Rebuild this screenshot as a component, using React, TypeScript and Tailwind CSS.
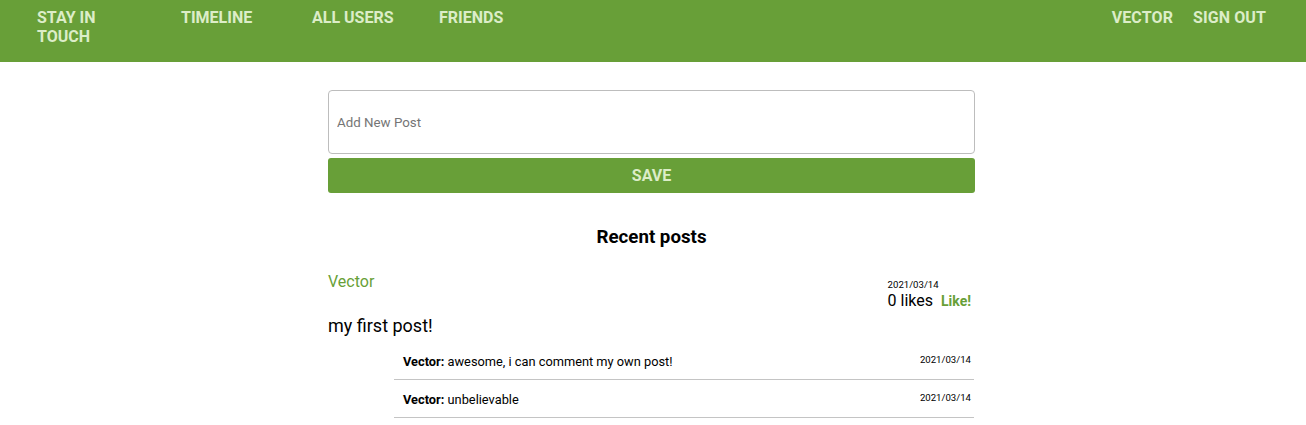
import React from 'react';

const comments = [
  { author: 'Vector', text: 'awesome, i can comment my own post!', date: '2021/03/14' },
  { author: 'Vector', text: 'unbelievable', date: '2021/03/14' },
];

export default function App() {
  return (
    <div className="min-h-[425px] bg-white font-['Roboto',sans-serif] text-black">
      <header className="flex h-[62px] items-start justify-between bg-[#689f38] pl-[37px] pr-[40px] pt-[8px] text-[16px] font-bold leading-[19px] text-[#dcedc8]">
        <nav className="flex">
          <a className="w-[144px] pr-[40px]">STAY IN TOUCH</a>
          <a className="w-[131px]">TIMELINE</a>
          <a className="w-[127px]">ALL USERS</a>
          <a>FRIENDS</a>
        </nav>
        <nav className="flex gap-[20px] tracking-[0.1px]">
          <a>VECTOR</a>
          <a>SIGN OUT</a>
        </nav>
      </header>

      <main className="ml-[328px] w-[647px] pt-[28px]">
        <input
          className="h-[64px] w-full rounded-[4px] border border-[#bdbdbd] px-[8px] text-[13.33px] text-[#333] outline-none placeholder:text-[#757575]"
          placeholder="Add New Post"
        />
        <button className="mt-[4px] h-[35px] w-full rounded-[3px] bg-[#689f38] text-[16px] font-bold text-[#dcedc8]">
          SAVE
        </button>

        <h2 className="mt-[33px] text-center text-[18.72px] font-bold leading-[22px]">Recent posts</h2>

        <div className="mt-[19px] flex justify-between">
          <span className="mt-[5px] text-[16px] leading-[19px] text-[#689f38]">Vector</span>
          <div className="pr-[4px] pt-[12px]">
            <div className="text-[9.6px] leading-[12px]">2021/03/14</div>
            <div className="flex items-baseline gap-[8px]">
              <span className="text-[16px] leading-[19px]">0 likes</span>
              <span className="text-[14px] font-bold text-[#689f38]">Like!</span>
            </div>
          </div>
        </div>
        <p className="mt-[3px] text-[18px] leading-[21px]">my first post!</p>

        <ul className="ml-[66px] mr-[1px] mt-[6px]">
          {comments.map((c, i) => (
            <li key={i} className="flex h-[38px] items-start justify-between border-b border-[#c4c4c4] pl-[9px] pr-[3px] pt-[12px]">
              <span className="text-[12.8px] leading-[15px]">
                <b>{c.author}:</b> {c.text}
              </span>
              <span className="text-[9.6px] leading-[12px]">{c.date}</span>
            </li>
          ))}
        </ul>
      </main>
    </div>
  );
}
